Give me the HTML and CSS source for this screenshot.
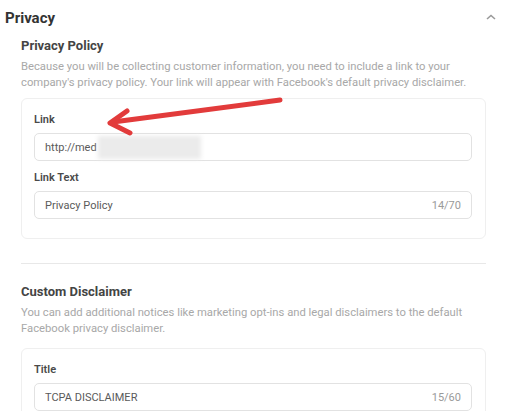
FILE: index.html
```
<html>
	<head>
		<title>Privacy</title>
		<link rel="stylesheet" href="styles.css">
	</head>
	<body>
		<div class="panel">
			<div class="panel-head">
				<h1>Privacy</h1>
				<svg class="chevron" width="10" height="6" viewBox="0 0 10 6"><path d="M1 5 L5 1.5 L9 5" fill="none" stroke="#9a9a9a" stroke-width="1.6"/></svg>
			</div>

			<div class="group">
				<h2>Privacy Policy</h2>
				<p class="desc">Because you will be collecting customer information, you need to include a link to your company's privacy policy. Your link will appear with Facebook's default privacy disclaimer.</p>

				<div class="card">
					<label>Link</label>
					<div class="field">
						<span class="value">http://med<span class="blur"></span></span>
					</div>
					<label>Link Text</label>
					<div class="field">
						<span class="value">Privacy Policy</span>
						<span class="count">14/70</span>
					</div>
				</div>
			</div>

			<hr class="divider">

			<div class="group">
				<h2>Custom Disclaimer</h2>
				<p class="desc">You can add additional notices like marketing opt-ins and legal disclaimers to the default Facebook privacy disclaimer.</p>

				<div class="card">
					<label>Title</label>
					<div class="field">
						<span class="value">TCPA DISCLAIMER</span>
						<span class="count">15/60</span>
					</div>
				</div>
			</div>
		</div>

		<svg class="arrow" width="518" height="411" viewBox="0 0 518 411">
			<g fill="none" stroke="#e23b3b" stroke-width="5" stroke-linecap="round" stroke-linejoin="round">
				<path d="M280 100 L113 122"/>
				<path d="M127 111 L110 123 L130 133"/>
			</g>
		</svg>
	</body>
</html>
```

FILE: styles.css
```
* {
	margin: 0;
	padding: 0;
	box-sizing: border-box;
}

body {
	background: white;
	font-family: Roboto, "Liberation Sans", sans-serif;
	color: #3a3a3a;
	position: relative;
	width: 518px;
	height: 411px;
	overflow: hidden;
}

.panel {
	padding: 8px 0 0 5px;
	width: 500px;
}

.panel-head {
	display: flex;
	justify-content: space-between;
	align-items: center;
	height: 20px;
	padding-right: 4px;
}

.panel-head h1 {
	font-size: 15px;
	font-weight: bold;
	color: #333;
	line-height: 20px;
}

.chevron {
	margin-top: -2px;
}

.group {
	margin-left: 16px;
	width: 465px;
}

.group h2 {
	font-size: 13px;
	font-weight: bold;
	color: #444;
	line-height: 18px;
	margin-top: 9px;
}

.desc {
	font-size: 11.25px;
	line-height: 16px;
	color: #a8a8a8;
	margin-top: 4px;
}

.card {
	border: 1px solid #efefef;
	border-radius: 6px;
	padding: 14px 13px 19px 12px;
	margin-top: 7px;
}

.card label {
	display: block;
	font-size: 11px;
	font-weight: 600;
	color: #4a4a4a;
	line-height: 14px;
	margin-bottom: 6px;
}

.field {
	display: flex;
	justify-content: space-between;
	align-items: center;
	height: 28px;
	border: 1px solid #e2e2e2;
	border-radius: 5px;
	padding: 0 10px;
	font-size: 11px;
	color: #5a5a5a;
	margin-bottom: 10px;
}

.field:last-child {
	margin-bottom: 0;
}

.value {
	display: flex;
	align-items: center;
}

.blur {
	display: inline-block;
	width: 103px;
	height: 23px;
	background: #ebebeb;
	filter: blur(2px);
	margin-left: 1px;
}

.count {
	color: #9a9a9a;
}

.divider {
	border: none;
	border-top: 1px solid #e8e8e8;
	margin: 24px 0 0 16px;
	width: 465px;
}

.divider + .group h2 {
	margin-top: 19px;
}

.divider + .group .card {
	margin-top: 11px;
}

.arrow {
	position: absolute;
	left: 0;
	top: 0;
}
```
